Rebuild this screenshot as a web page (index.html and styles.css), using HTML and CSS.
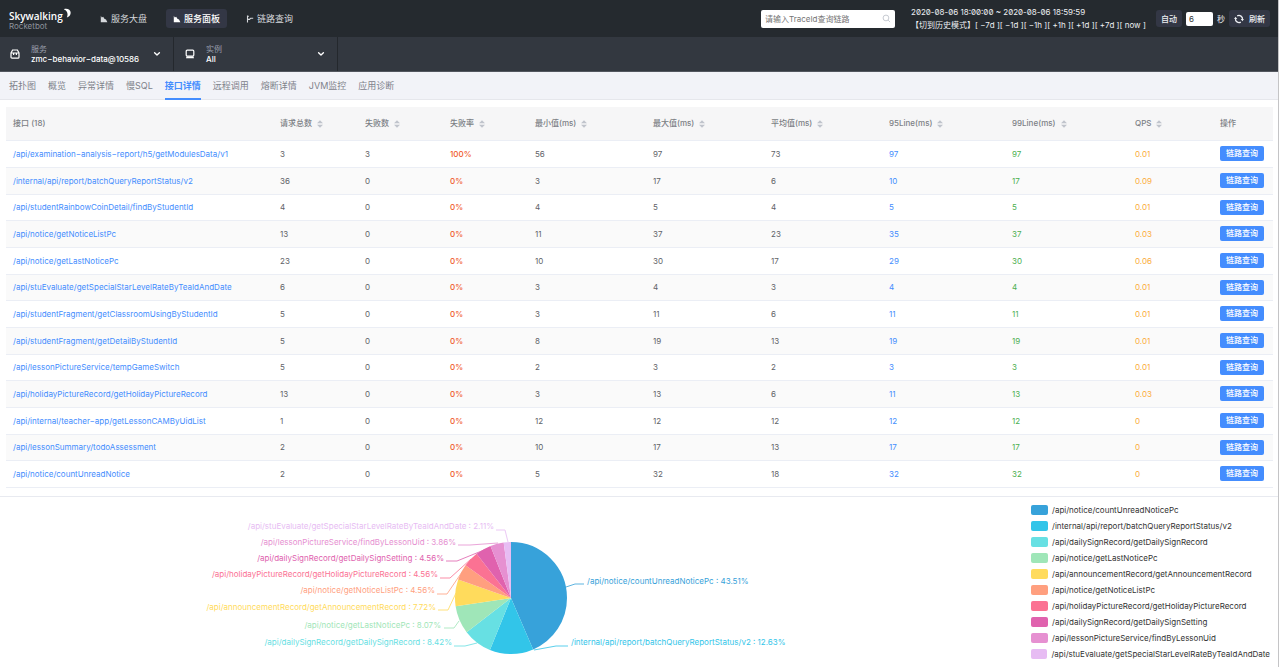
FILE: index.html
```html
<!DOCTYPE html>
<html lang="zh-CN">
<head>
<meta charset="utf-8">
<meta name="viewport" content="width=device-width, initial-scale=1">
<title>SkyWalking Rocketbot</title>
<link rel="stylesheet" href="styles.css">
</head>
<body>
<svg class="defs" aria-hidden="true">
  <symbol id="i-chart" viewBox="0 0 8 8"><path d="M.8 .8v6.4h6.6L6 4.4 4.4 3.7 3.2 1.8 1.8 2.4z" fill="currentColor"/></symbol>
  <symbol id="i-trace" viewBox="0 0 8 8"><path d="M1.5 .5v7M1.5 4.4H3.6l1-1.2h2.6M1.5 1.4h1.2" fill="none" stroke="currentColor" stroke-width="1.1"/></symbol>
  <symbol id="i-caret" viewBox="0 0 8 8"><path d="M1.6 2.8L4 5l2.4-2.2" fill="none" stroke="currentColor" stroke-width="1.4" stroke-linecap="round" stroke-linejoin="round"/></symbol>
  <symbol id="i-sort" viewBox="0 0 8 10"><path d="M4 1.2L7 4.3H1zM4 8.8L7 5.7H1z" fill="currentColor"/></symbol>
</svg>
<div class="app">
  <header class="top">
    <div class="brand">
      <span class="brand-name">Skywalking<svg class="moon" viewBox="0 0 10 12" aria-hidden="true"><path d="M1 1.2C5-.4 9.6 1.8 9.6 5.6 9.6 8.2 7.8 10.6 4.8 11.6 6.4 8.6 6.2 3 1 1.2z" fill="#fff"/></svg></span>
      <span class="brand-sub">Rocketbot</span>
    </div>
    <nav class="nav">
      <a class="nav-item" href="#"><svg class="ico"><use href="#i-chart"/></svg>服务大盘</a>
      <a class="nav-item active" href="#"><svg class="ico"><use href="#i-chart"/></svg>服务面板</a>
      <a class="nav-item" href="#"><svg class="ico"><use href="#i-trace"/></svg>链路查询</a>
    </nav>
    <label class="search">
      <input type="text" placeholder="请输入TraceId查询链路" aria-label="TraceId">
      <svg viewBox="0 0 10 10" aria-hidden="true"><circle cx="4.4" cy="4.4" r="3.2"/><path d="M6.8 6.8L9 9"/></svg>
    </label>
    <div class="time">
      <span class="range">2020-08-06 18:00:00 ~ 2020-08-06 18:59:59</span>
      <span>【切到历史模式】[ −7d ][ −1d ][ −1h ][ +1h ][ +1d ][ +7d ][ now ]</span>
    </div>
    <div class="reload">
      <button class="dark-btn" type="button">自动</button>
      <label class="seconds"><input type="text" value="6">秒</label>
      <button class="dark-btn" type="button"><svg class="sync" viewBox="0 0 10 10" aria-hidden="true"><path d="M3.2 1.9A3.6 3.6 0 0 1 8.5 5.6M6.8 8.1A3.6 3.6 0 0 1 1.5 4.4" fill="none" stroke="currentColor" stroke-width="1.3"/><path d="M6.7 5.1h3.2L8.5 7.2zM.1 4.9h3.2L1.5 2.8z" fill="currentColor"/></svg>刷新</button>
    </div>
  </header>

  <div class="selectors">
    <button class="selector" type="button">
      <svg class="sel-ico" viewBox="0 0 10 10" aria-hidden="true"><path d="M2.6 1h4.8L9 4v4.2a1 1 0 0 1-1 1H2a1 1 0 0 1-1-1V4z" fill="none" stroke="currentColor" stroke-width="1.2"/><path d="M1 4h8M3.6 4v2M6.4 4v2" stroke="currentColor" stroke-width="1.2"/></svg>
      <span class="sel-text"><span class="sel-label">服务</span><span>zmc−behavior−data@10586</span></span>
      <svg class="ico"><use href="#i-caret"/></svg>
    </button>
    <button class="selector" type="button">
      <svg class="sel-ico" viewBox="0 0 10 10" aria-hidden="true"><rect x="1.2" y="1.2" width="7.6" height="5.8" rx="1" fill="none" stroke="currentColor" stroke-width="1.2"/><path d="M1.6 7.2h6.8L9 9.2H1z" fill="currentColor"/></svg>
      <span class="sel-text"><span class="sel-label">实例</span><span>All</span></span>
      <svg class="ico"><use href="#i-caret"/></svg>
    </button>
  </div>

  <nav class="tabs">
    <a href="#">拓扑图</a><a href="#">概览</a><a href="#">异常详情</a><a href="#">慢SQL</a><a class="active" href="#">接口详情</a><a href="#">远程调用</a><a href="#">熔断详情</a><a href="#">JVM监控</a><a href="#">应用诊断</a>
  </nav>

  <main>
    <section class="table-wrap">
      <table>
        <colgroup><col><col class="w-s"><col class="w-s"><col class="w-s"><col class="w-m"><col class="w-m"><col class="w-m"><col class="w-l"><col class="w-l"><col class="w-s"><col class="w-op"></colgroup>
        <thead><tr>
          <th>接口 (18)</th>
          <th>请求总数<svg><use href="#i-sort"/></svg></th>
          <th>失败数<svg><use href="#i-sort"/></svg></th>
          <th>失败率<svg><use href="#i-sort"/></svg></th>
          <th>最小值(ms)<svg><use href="#i-sort"/></svg></th>
          <th>最大值(ms)<svg><use href="#i-sort"/></svg></th>
          <th>平均值(ms)<svg><use href="#i-sort"/></svg></th>
          <th>95Line(ms)<svg><use href="#i-sort"/></svg></th>
          <th>99Line(ms)<svg><use href="#i-sort"/></svg></th>
          <th>QPS<svg><use href="#i-sort"/></svg></th>
          <th>操作</th>
        </tr></thead>
        <tbody>
          <tr><td><a href="#">/api/examination−analysis−report/h5/getModulesData/v1</a></td><td>3</td><td>3</td><td>100%</td><td>56</td><td>97</td><td>73</td><td>97</td><td>97</td><td>0.01</td><td><button type="button">链路查询</button></td></tr>
          <tr><td><a href="#">/internal/api/report/batchQueryReportStatus/v2</a></td><td>36</td><td>0</td><td>0%</td><td>3</td><td>17</td><td>6</td><td>10</td><td>17</td><td>0.09</td><td><button type="button">链路查询</button></td></tr>
          <tr><td><a href="#">/api/studentRainbowCoinDetail/findByStudentId</a></td><td>4</td><td>0</td><td>0%</td><td>4</td><td>5</td><td>4</td><td>5</td><td>5</td><td>0.01</td><td><button type="button">链路查询</button></td></tr>
          <tr><td><a href="#">/api/notice/getNoticeListPc</a></td><td>13</td><td>0</td><td>0%</td><td>11</td><td>37</td><td>23</td><td>35</td><td>37</td><td>0.03</td><td><button type="button">链路查询</button></td></tr>
          <tr><td><a href="#">/api/notice/getLastNoticePc</a></td><td>23</td><td>0</td><td>0%</td><td>10</td><td>30</td><td>17</td><td>29</td><td>30</td><td>0.06</td><td><button type="button">链路查询</button></td></tr>
          <tr><td><a href="#">/api/stuEvaluate/getSpecialStarLevelRateByTeaIdAndDate</a></td><td>6</td><td>0</td><td>0%</td><td>3</td><td>4</td><td>3</td><td>4</td><td>4</td><td>0.01</td><td><button type="button">链路查询</button></td></tr>
          <tr><td><a href="#">/api/studentFragment/getClassroomUsingByStudentId</a></td><td>5</td><td>0</td><td>0%</td><td>3</td><td>11</td><td>6</td><td>11</td><td>11</td><td>0.01</td><td><button type="button">链路查询</button></td></tr>
          <tr><td><a href="#">/api/studentFragment/getDetailByStudentId</a></td><td>5</td><td>0</td><td>0%</td><td>8</td><td>19</td><td>13</td><td>19</td><td>19</td><td>0.01</td><td><button type="button">链路查询</button></td></tr>
          <tr><td><a href="#">/api/lessonPictureService/tempGameSwitch</a></td><td>5</td><td>0</td><td>0%</td><td>2</td><td>3</td><td>2</td><td>3</td><td>3</td><td>0.01</td><td><button type="button">链路查询</button></td></tr>
          <tr><td><a href="#">/api/holidayPictureRecord/getHolidayPictureRecord</a></td><td>13</td><td>0</td><td>0%</td><td>3</td><td>13</td><td>6</td><td>11</td><td>13</td><td>0.03</td><td><button type="button">链路查询</button></td></tr>
          <tr><td><a href="#">/api/internal/teacher−app/getLessonCAMByUidList</a></td><td>1</td><td>0</td><td>0%</td><td>12</td><td>12</td><td>12</td><td>12</td><td>12</td><td>0</td><td><button type="button">链路查询</button></td></tr>
          <tr><td><a href="#">/api/lessonSummary/todoAssessment</a></td><td>2</td><td>0</td><td>0%</td><td>10</td><td>17</td><td>13</td><td>17</td><td>17</td><td>0</td><td><button type="button">链路查询</button></td></tr>
          <tr><td><a href="#">/api/notice/countUnreadNotice</a></td><td>2</td><td>0</td><td>0%</td><td>5</td><td>32</td><td>18</td><td>32</td><td>32</td><td>0</td><td><button type="button">链路查询</button></td></tr>
        </tbody>
      </table>
    </section>

    <section class="chart">
      <svg class="pie" viewBox="0 0 1022 168" role="img" aria-label="接口请求占比">
        <g class="slices" transform="translate(511 101) rotate(-90)">
          <circle r="28" pathLength="100" class="c1" stroke-dasharray="43.51 100"/>
          <circle r="28" pathLength="100" class="c2" stroke-dasharray="12.63 100" stroke-dashoffset="-43.51"/>
          <circle r="28" pathLength="100" class="c3" stroke-dasharray="8.42 100" stroke-dashoffset="-56.14"/>
          <circle r="28" pathLength="100" class="c4" stroke-dasharray="8.07 100" stroke-dashoffset="-64.56"/>
          <circle r="28" pathLength="100" class="c5" stroke-dasharray="7.72 100" stroke-dashoffset="-72.63"/>
          <circle r="28" pathLength="100" class="c6" stroke-dasharray="4.56 100" stroke-dashoffset="-80.35"/>
          <circle r="28" pathLength="100" class="c7" stroke-dasharray="4.56 100" stroke-dashoffset="-84.91"/>
          <circle r="28" pathLength="100" class="c8" stroke-dasharray="4.56 100" stroke-dashoffset="-89.47"/>
          <circle r="28" pathLength="100" class="c9" stroke-dasharray="3.86 100" stroke-dashoffset="-94.03"/>
          <circle r="28" pathLength="100" class="c10" stroke-dasharray="2.11 100" stroke-dashoffset="-97.89"/>
        </g>
        <g class="leaders">
          <path class="c1" d="M566 90L575 87H584"/>
          <path class="c2" d="M534 153L556 149H568"/>
          <path class="c3" d="M477 146L465 149H454"/>
          <path class="c4" d="M459 124L454 131H444"/>
          <path class="c5" d="M456 96L448 113H438"/>
          <path class="c6" d="M462 75L447 97H437"/>
          <path class="c7" d="M471 62L450 81H440"/>
          <path class="c8" d="M484 53L457 64H446"/>
          <path class="c9" d="M498 46L470 48H458"/>
          <path class="c10" d="M508 45L505 33H496"/>
        </g>
        <g class="labels">
          <text class="c1" x="587" y="87">/api/notice/countUnreadNoticePc : 43.51%</text>
          <text class="c2" x="571" y="148">/internal/api/report/batchQueryReportStatus/v2 : 12.63%</text>
          <text class="c3 end" x="452" y="148">/api/dailySignRecord/getDailySignRecord : 8.42%</text>
          <text class="c4 end" x="441" y="131">/api/notice/getLastNoticePc : 8.07%</text>
          <text class="c5 end" x="436" y="113">/api/announcementRecord/getAnnouncementRecord : 7.72%</text>
          <text class="c6 end" x="435" y="96">/api/notice/getNoticeListPc : 4.56%</text>
          <text class="c7 end" x="438" y="80">/api/holidayPictureRecord/getHolidayPictureRecord : 4.56%</text>
          <text class="c8 end" x="444" y="64">/api/dailySignRecord/getDailySignSetting : 4.56%</text>
          <text class="c9 end" x="456" y="48">/api/lessonPictureService/findByLessonUid : 3.86%</text>
          <text class="c10 end" x="494" y="32">/api/stuEvaluate/getSpecialStarLevelRateByTeaIdAndDate : 2.11%</text>
        </g>
      </svg>
      <ul class="legend">
        <li class="c1">/api/notice/countUnreadNoticePc</li>
        <li class="c2">/internal/api/report/batchQueryReportStatus/v2</li>
        <li class="c3">/api/dailySignRecord/getDailySignRecord</li>
        <li class="c4">/api/notice/getLastNoticePc</li>
        <li class="c5">/api/announcementRecord/getAnnouncementRecord</li>
        <li class="c6">/api/notice/getNoticeListPc</li>
        <li class="c7">/api/holidayPictureRecord/getHolidayPictureRecord</li>
        <li class="c8">/api/dailySignRecord/getDailySignSetting</li>
        <li class="c9">/api/lessonPictureService/findByLessonUid</li>
        <li class="c10">/api/stuEvaluate/getSpecialStarLevelRateByTeaIdAndDate</li>
      </ul>
    </section>
  </main>
</div>
</body>
</html>
```
FILE: styles.css
```css
* { box-sizing: border-box; }
body {
  margin: 0;
  background: #fff;
  color: #5f6368;
  font: 8px/12px Inter, "Noto Sans CJK SC", sans-serif;
}
a { color: inherit; text-decoration: none; }
button, input { font: inherit; color: inherit; border: 0; margin: 0; padding: 0; }
button { cursor: pointer; }
svg { flex: none; }
.defs { display: none; }
.app { margin-right: 1px; border-right: 1px solid #c4c4c6; min-height: 100vh; }

/* top bar */
.top {
  display: flex;
  align-items: center;
  height: 37px;
  padding: 0 8px 0 9px;
  background: #252a2f;
  color: #eceef2;
}
.brand { display: flex; flex-direction: column; width: 84px; padding-top: 2px; }
.brand-name {
  display: flex;
  align-items: flex-start;
  font: 600 10px/12px "Open Sans", sans-serif;
  color: #fff;
}
.moon { width: 8px; height: 10px; margin-top: -2px; }
.brand-sub { color: #8d929c; line-height: 8px; }
.nav { display: flex; gap: 12px; font-size: 9px; }
.nav-item {
  display: flex;
  align-items: center;
  gap: 3px;
  height: 19px;
  padding: 0 7px;
  border-radius: 3px;
  color: #d5d8dc;
}
.nav-item.active { background: #333745; color: #fff; font-weight: 500; }
.ico { width: 8px; height: 8px; }
.search {
  display: flex;
  align-items: center;
  width: 134px;
  height: 18px;
  margin-left: auto;
  padding: 0 4px;
  border-radius: 2px;
  background: #fff;
}
.search input { flex: 1; min-width: 0; background: none; outline: 0; color: #333; }
.search input::placeholder { color: #757575; opacity: 1; }
.search svg { width: 9px; height: 9px; fill: none; stroke: #c0c4cc; stroke-width: 1; }
.time { display: flex; flex-direction: column; width: 245px; margin-left: 16px; line-height: 13px; white-space: nowrap; }
.range { font-feature-settings: "zero"; }
.reload { display: flex; align-items: center; gap: 4px; }
.dark-btn {
  display: flex;
  align-items: center;
  gap: 5px;
  height: 17px;
  padding: 0 5px;
  border-radius: 3px;
  background: #333745;
  font-weight: 500;
}
.sync { width: 10px; height: 10px; }
.seconds { display: flex; align-items: center; gap: 4px; }
.seconds input { width: 27px; height: 14px; padding: 0 3px; border-radius: 2px; background: #fff; color: #333; }

/* service and instance pickers */
.selectors { display: flex; height: 35px; background: #333840; border-bottom: 1px solid #53575f; color: #fff; }
.selector {
  display: flex;
  align-items: center;
  gap: 11px;
  width: 164px;
  padding: 0 12px 0 11px;
  background: none;
  border-right: 1px solid #24282d;
  text-align: left;
}
.selector:first-child { width: 174px; padding-left: 10px; }
.sel-ico { width: 10px; height: 10px; }
.sel-text { display: flex; flex: 1; flex-direction: column; line-height: 10px; font-weight: 500; white-space: nowrap; }
.sel-label { color: #9a9fac; font-weight: 400; }

/* tabs */
.tabs {
  display: flex;
  gap: 12px;
  height: 28px;
  padding: 0 9px;
  background: #f2f3f8;
  border-bottom: 1px solid #e6e7ec;
  font-size: 9px;
  line-height: 27px;
  color: #7e828a;
}
.tabs .active { color: #448dfe; font-weight: 700; border-bottom: 1px solid #448dfe; box-shadow: 0 1px #448dfe; }

/* endpoint table */
.table-wrap { padding: 7px 5px 8px 6px; border-bottom: 1px solid #e8eaf0; }
table { width: 100%; border-collapse: collapse; table-layout: fixed; }
.w-s { width: 85px; }
.w-m { width: 118px; }
.w-l { width: 123px; }
.w-op { width: 60px; }
th, td { padding: 0 0 0 7px; text-align: left; white-space: nowrap; border-bottom: 1px solid #ebeef5; }
th { height: 33px; background: #f6f6f7; color: #7c7f85; font-weight: 500; }
th svg { width: 8px; height: 10px; margin-left: 4px; vertical-align: middle; color: #c0c4cc; }
td { height: 27px; }
tr:nth-child(3n) td { height: 26px; }
tr:nth-child(even) td { background: #fafafa; }
td:nth-child(1), td:nth-child(8) { color: #448dfe; }
td:nth-child(4) { color: #f0592b; font-weight: 500; }
td:nth-child(9) { color: #4caf50; }
td:nth-child(10) { color: #faad3c; }
td button {
  display: block;
  width: 44px;
  height: 15px;
  border-radius: 2px;
  background: #448dfe;
  color: #fff;
  font-weight: 500;
  line-height: 15px;
}

/* pie chart */
.chart { display: flex; align-items: flex-start; }
.pie { flex: 1; min-width: 0; height: 168px; }
.slices { fill: none; stroke-width: 56; }
.slices circle { stroke: var(--c); }
.leaders { fill: none; stroke-width: 1; opacity: 0.8; }
.leaders path { stroke: var(--c); }
.labels text { fill: var(--c); }
.labels .end { text-anchor: end; }
.legend { width: 256px; margin: 0; padding: 5px 8px 0 9px; list-style: none; color: #333; }
.legend li { display: flex; align-items: center; gap: 4px; height: 16px; white-space: nowrap; }
.legend li::before { content: ""; width: 17px; height: 10px; border-radius: 2px; background: var(--c); }
.c1 { --c: #37a2da; }
.c2 { --c: #32c5e9; }
.c3 { --c: #67e0e3; }
.c4 { --c: #9fe6b8; }
.c5 { --c: #ffdb5c; }
.c6 { --c: #ff9f7f; }
.c7 { --c: #fb7293; }
.c8 { --c: #e062ae; }
.c9 { --c: #e690d1; }
.c10 { --c: #e7bcf3; }
```
